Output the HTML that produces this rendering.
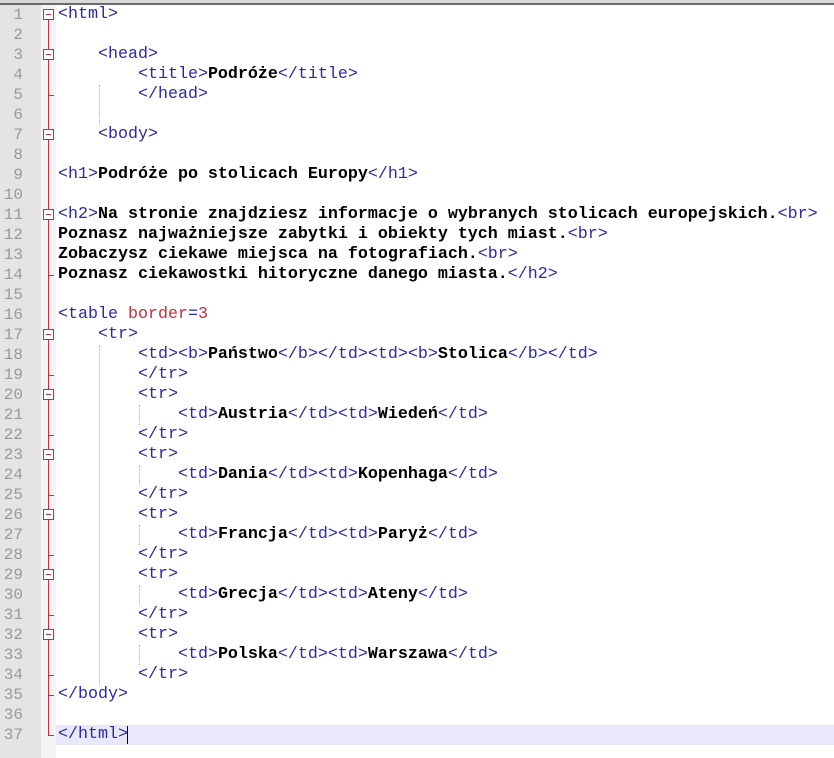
<!DOCTYPE html>
<html><head><meta charset="utf-8"><style>
html,body{margin:0;padding:0;width:834px;height:758px;overflow:hidden;background:#fff;position:relative}
.top{position:absolute;left:0;top:0;width:834px;height:3px;background:#d8d8d8;border-bottom:2px solid #6a6a6a}
.gut{position:absolute;left:0;top:5px;width:41px;height:753px;background:#e4e4e4}
.fold{position:absolute;left:41px;top:5px;width:15px;height:753px;background:#f4f4f4}
.red{position:absolute;left:48px;top:15px;width:1px;height:720px;background:#c03040}
.hl{position:absolute;left:56px;top:725px;width:778px;height:20px;background:#e8e8fa}
.ln{position:absolute;left:0;width:23px;text-align:right;font:16px "Liberation Mono",monospace;color:#999;line-height:20px}
.c{position:absolute;left:58px;font:16.67px "Liberation Mono",monospace;line-height:20px;white-space:pre;color:#000;font-weight:bold}
.t{color:#2a2aa8;font-weight:normal}
.a{color:#c03040;font-weight:normal}
.v{color:#8a3090;font-weight:normal}
.box{position:absolute;left:43px;width:11px;height:11px;border:1px solid #c03040;background:#fff;box-sizing:border-box}
.box:after{content:"";position:absolute;left:2px;top:4px;width:5px;height:1px;background:#c03040}
.tick{position:absolute;left:48px;width:6px;height:1px;background:#c03040}
.ig{position:absolute;width:0;border-left:1px dotted #b0b0b0}
.cur{position:absolute;left:127px;top:726px;width:1px;height:18px;background:#000}
</style></head><body>
<div class="top"></div><div class="gut"></div><div class="fold"></div><div class="hl"></div><div class="red"></div>
<div class="ig" style="left:99px;top:85px;height:40px"></div>
<div class="ig" style="left:99px;top:345px;height:340px"></div>
<div class="ig" style="left:139px;top:405px;height:20px"></div>
<div class="ig" style="left:139px;top:465px;height:20px"></div>
<div class="ig" style="left:139px;top:525px;height:20px"></div>
<div class="ig" style="left:139px;top:585px;height:20px"></div>
<div class="ig" style="left:139px;top:645px;height:20px"></div>
<div class="c" style="top:5px"><span class="t">&lt;html&gt;</span></div>
<div class="c" style="top:45px">    <span class="t">&lt;head&gt;</span></div>
<div class="c" style="top:65px">        <span class="t">&lt;title&gt;</span>Podróże<span class="t">&lt;/title&gt;</span></div>
<div class="c" style="top:85px">        <span class="t">&lt;/head&gt;</span></div>
<div class="c" style="top:125px">    <span class="t">&lt;body&gt;</span></div>
<div class="c" style="top:165px"><span class="t">&lt;h1&gt;</span>Podróże po stolicach Europy<span class="t">&lt;/h1&gt;</span></div>
<div class="c" style="top:205px"><span class="t">&lt;h2&gt;</span>Na stronie znajdziesz informacje o wybranych stolicach europejskich.<span class="t">&lt;br&gt;</span></div>
<div class="c" style="top:225px">Poznasz najważniejsze zabytki i obiekty tych miast.<span class="t">&lt;br&gt;</span></div>
<div class="c" style="top:245px">Zobaczysz ciekawe miejsca na fotografiach.<span class="t">&lt;br&gt;</span></div>
<div class="c" style="top:265px">Poznasz ciekawostki hitoryczne danego miasta.<span class="t">&lt;/h2&gt;</span></div>
<div class="c" style="top:305px"><span class="t">&lt;table </span><span class="a">border</span><span class="t">=</span><span class="a">3</span></div>
<div class="c" style="top:325px">    <span class="t">&lt;tr&gt;</span></div>
<div class="c" style="top:345px">        <span class="t">&lt;td&gt;&lt;b&gt;</span>Państwo<span class="t">&lt;/b&gt;&lt;/td&gt;&lt;td&gt;&lt;b&gt;</span>Stolica<span class="t">&lt;/b&gt;&lt;/td&gt;</span></div>
<div class="c" style="top:365px">        <span class="t">&lt;/tr&gt;</span></div>
<div class="c" style="top:385px">        <span class="t">&lt;tr&gt;</span></div>
<div class="c" style="top:405px">            <span class="t">&lt;td&gt;</span>Austria<span class="t">&lt;/td&gt;&lt;td&gt;</span>Wiedeń<span class="t">&lt;/td&gt;</span></div>
<div class="c" style="top:425px">        <span class="t">&lt;/tr&gt;</span></div>
<div class="c" style="top:445px">        <span class="t">&lt;tr&gt;</span></div>
<div class="c" style="top:465px">            <span class="t">&lt;td&gt;</span>Dania<span class="t">&lt;/td&gt;&lt;td&gt;</span>Kopenhaga<span class="t">&lt;/td&gt;</span></div>
<div class="c" style="top:485px">        <span class="t">&lt;/tr&gt;</span></div>
<div class="c" style="top:505px">        <span class="t">&lt;tr&gt;</span></div>
<div class="c" style="top:525px">            <span class="t">&lt;td&gt;</span>Francja<span class="t">&lt;/td&gt;&lt;td&gt;</span>Paryż<span class="t">&lt;/td&gt;</span></div>
<div class="c" style="top:545px">        <span class="t">&lt;/tr&gt;</span></div>
<div class="c" style="top:565px">        <span class="t">&lt;tr&gt;</span></div>
<div class="c" style="top:585px">            <span class="t">&lt;td&gt;</span>Grecja<span class="t">&lt;/td&gt;&lt;td&gt;</span>Ateny<span class="t">&lt;/td&gt;</span></div>
<div class="c" style="top:605px">        <span class="t">&lt;/tr&gt;</span></div>
<div class="c" style="top:625px">        <span class="t">&lt;tr&gt;</span></div>
<div class="c" style="top:645px">            <span class="t">&lt;td&gt;</span>Polska<span class="t">&lt;/td&gt;&lt;td&gt;</span>Warszawa<span class="t">&lt;/td&gt;</span></div>
<div class="c" style="top:665px">        <span class="t">&lt;/tr&gt;</span></div>
<div class="c" style="top:685px"><span class="t">&lt;/body&gt;</span></div>
<div class="c" style="top:725px"><span class="t">&lt;/html&gt;</span></div>
<div class="cur"></div>
<div class="ln" style="top:5px">1</div><div class="ln" style="top:25px">2</div><div class="ln" style="top:45px">3</div><div class="ln" style="top:65px">4</div><div class="ln" style="top:85px">5</div><div class="ln" style="top:105px">6</div><div class="ln" style="top:125px">7</div><div class="ln" style="top:145px">8</div><div class="ln" style="top:165px">9</div><div class="ln" style="top:185px">10</div><div class="ln" style="top:205px">11</div><div class="ln" style="top:225px">12</div><div class="ln" style="top:245px">13</div><div class="ln" style="top:265px">14</div><div class="ln" style="top:285px">15</div><div class="ln" style="top:305px">16</div><div class="ln" style="top:325px">17</div><div class="ln" style="top:345px">18</div><div class="ln" style="top:365px">19</div><div class="ln" style="top:385px">20</div><div class="ln" style="top:405px">21</div><div class="ln" style="top:425px">22</div><div class="ln" style="top:445px">23</div><div class="ln" style="top:465px">24</div><div class="ln" style="top:485px">25</div><div class="ln" style="top:505px">26</div><div class="ln" style="top:525px">27</div><div class="ln" style="top:545px">28</div><div class="ln" style="top:565px">29</div><div class="ln" style="top:585px">30</div><div class="ln" style="top:605px">31</div><div class="ln" style="top:625px">32</div><div class="ln" style="top:645px">33</div><div class="ln" style="top:665px">34</div><div class="ln" style="top:685px">35</div><div class="ln" style="top:705px">36</div><div class="ln" style="top:725px">37</div>
<div class="box" style="top:9px"></div><div class="box" style="top:49px"></div><div class="box" style="top:129px"></div><div class="box" style="top:209px"></div><div class="box" style="top:329px"></div><div class="box" style="top:389px"></div><div class="box" style="top:449px"></div><div class="box" style="top:509px"></div><div class="box" style="top:569px"></div><div class="box" style="top:629px"></div>
<div class="tick" style="top:95px"></div><div class="tick" style="top:275px"></div><div class="tick" style="top:375px"></div><div class="tick" style="top:435px"></div><div class="tick" style="top:495px"></div><div class="tick" style="top:555px"></div><div class="tick" style="top:615px"></div><div class="tick" style="top:675px"></div><div class="tick" style="top:695px"></div><div class="tick" style="top:735px"></div>
</body></html>
